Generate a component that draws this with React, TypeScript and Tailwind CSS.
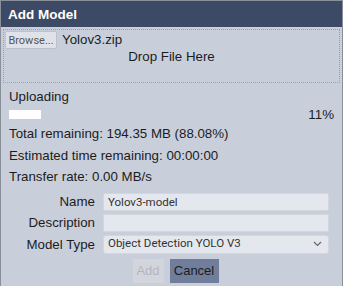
export default function App() {
  const rows = [
    "Total remaining: 194.35 MB (88.08%)",
    "Estimated time remaining: 00:00:00",
    "Transfer rate: 0.00 MB/s",
  ]

  return (
    <div className="w-[344px] h-[286px] overflow-hidden bg-white">
      <div className="w-[343px] h-[300px] border border-[#8a909a] bg-[#c8cfdb] text-[13.3px] text-[#1c1c1c] font-['Liberation_Sans',Arial,sans-serif]">
        <div className="h-[26px] bg-[#3c4a66] px-[7px] pt-[4px] text-[13.5px] font-bold text-white">Add Model</div>

        <div className="mx-[2px] mt-[2px] h-[54px] border border-dotted border-[#9aa1ab] px-[1px] pt-[1px]">
          <div className="flex h-[18px] items-center">
            <button className="h-[18px] w-[52px] whitespace-nowrap rounded-[2px] border border-[#bcc2cb] bg-[#dfe3e9] text-[11px] leading-none text-[#555] font-['Roboto',sans-serif]">
              Browse...
            </button>
            <span className="ml-[5px]">Yolov3.zip</span>
          </div>
          <div className="text-center leading-[15px]">Drop File Here</div>
        </div>

        <div className="px-[8px] pt-[4px]">
          <div className="leading-[19px]">Uploading</div>
          <div className="flex h-[17px] items-center justify-between">
            <div className="h-[9px] w-[32px] bg-white" />
            <span>11%</span>
          </div>
          {rows.map((r, i) => (
            <div key={i} className="leading-[21.5px]">{r}</div>
          ))}
        </div>

        <div className="mt-[5px] grid grid-cols-[94px_226px] gap-x-[8px] gap-y-[3px] items-center">
          <span className="text-right leading-[18px]">Name</span>
          <input
            defaultValue="Yolov3-model"
            className="h-[18px] rounded-[2px] border border-[#d2d7df] bg-[#e4e8ee] px-[4px] text-[11.5px] text-[#333] font-['Roboto',sans-serif] outline-none"
          />
          <span className="text-right leading-[18px]">Description</span>
          <input className="h-[18px] rounded-[2px] border border-[#d2d7df] bg-[#e4e8ee] px-[4px] outline-none" />
          <span className="text-right leading-[19px]">Model Type</span>
          <div className="flex h-[19px] items-center justify-between rounded-[3px] border border-[#d2d7df] bg-[#e4e8ee] px-[4px] text-[11.5px] text-[#333] font-['Roboto',sans-serif]">
            <span>Object Detection YOLO V3</span>
            <svg width="9" height="6" viewBox="0 0 9 6" className="mr-[2px]">
              <path d="M1 1l3.5 3.5L8 1" fill="none" stroke="#666" strokeWidth="1.2" />
            </svg>
          </div>
        </div>

        <div className="mt-[5px] flex justify-center gap-[6px] pl-[8px]">
          <button disabled className="h-[24px] w-[31px] bg-[#d2d5db] text-[13px] text-[#b3b7be]">Add</button>
          <button className="h-[24px] w-[49px] bg-[#717e9b] text-[13px] text-[#1c1c1c]">Cancel</button>
        </div>
      </div>
    </div>
  )
}
